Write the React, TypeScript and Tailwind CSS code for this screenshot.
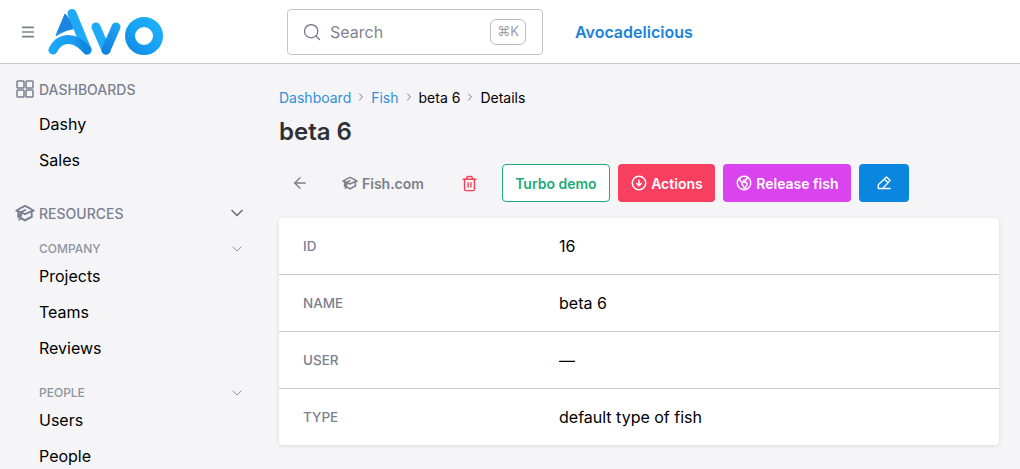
import { ArrowLeft, ChevronDown, ChevronRight, Menu, Search, Trash2 } from 'lucide-react';

const font = { fontFamily: 'Inter, sans-serif' };

function GradCap({ className }: { className?: string }) {
  return (
    <svg className={className} viewBox="0 0 24 24" fill="none" stroke="currentColor" strokeWidth={2.3} strokeLinecap="round" strokeLinejoin="round">
      <path d="M4.26 10.147a60.438 60.438 0 0 0-.491 6.347A48.62 48.62 0 0 1 12 20.904a48.62 48.62 0 0 1 8.232-4.41 60.46 60.46 0 0 0-.491-6.347m-15.482 0a50.636 50.636 0 0 0-2.658-.813A59.906 59.906 0 0 1 12 3.493a59.903 59.903 0 0 1 10.399 5.84c-.896.248-1.783.52-2.658.814m-15.482 0A50.717 50.717 0 0 1 12 13.489a50.702 50.702 0 0 1 7.74-3.342M6.75 15a.75.75 0 1 0 0-1.5.75.75 0 0 0 0 1.5Zm0 0v-3.675A55.378 55.378 0 0 1 12 8.443m-7.007 11.55A5.981 5.981 0 0 0 6.75 15.75v-1.5" />
    </svg>
  );
}

function Globe({ className }: { className?: string }) {
  return (
    <svg className={className} viewBox="0 0 24 24" fill="none" stroke="currentColor" strokeWidth={2} strokeLinecap="round" strokeLinejoin="round">
      <path d="m6.115 5.19.319 1.913A6 6 0 0 0 8.11 10.36L9.75 12l-.387.775c-.217.433-.132.956.21 1.298l1.348 1.348c.21.21.329.497.329.795v1.089c0 .426.24.815.622 1.006l.153.076c.433.217.956.132 1.298-.21l.723-.723a8.7 8.7 0 0 0 2.288-4.042 1.087 1.087 0 0 0-.358-1.099l-1.33-1.108c-.251-.21-.582-.299-.905-.245l-1.17.195a1.125 1.125 0 0 1-.98-.314l-.295-.295a1.125 1.125 0 0 1 0-1.591l.13-.132a1.125 1.125 0 0 1 1.3-.21l.603.302a.809.809 0 0 0 1.086-1.086L14.25 7.5l1.256-.837a4.5 4.5 0 0 0 1.528-1.732l.146-.292M6.115 5.19A9 9 0 1 0 17.18 4.64M6.115 5.19A8.965 8.965 0 0 1 12 3c1.929 0 3.716.607 5.18 1.64" />
    </svg>
  );
}

function DownCircle({ className }: { className?: string }) {
  return (
    <svg className={className} viewBox="0 0 24 24" fill="none" stroke="currentColor" strokeWidth={2} strokeLinecap="round" strokeLinejoin="round">
      <path d="m9 12.75 3 3m0 0 3-3m-3 3v-7.5M21 12a9 9 0 1 1-18 0 9 9 0 0 1 18 0Z" />
    </svg>
  );
}

function Pencil({ className }: { className?: string }) {
  return (
    <svg className={className} viewBox="0 0 16 16" fill="none" stroke="currentColor" strokeWidth={1.3} strokeLinecap="round" strokeLinejoin="round">
      <path d="M10.500 2 14.200 5.400 6.800 13.500H2.300V9.700L10.500 2Z" />
      <path d="M8.300 4.200 12 7.600" />
      <path d="M6.800 13.500H14.200" />
    </svg>
  );
}

function DashGrid({ className }: { className?: string }) {
  return (
    <svg className={className} viewBox="0 0 18 18" fill="none" stroke="currentColor" strokeWidth={1.5}>
      <rect x="1" y="1" width="7" height="7" rx="0.800" />
      <rect x="10" y="1" width="7" height="7" rx="0.800" />
      <rect x="1" y="10" width="7" height="7" rx="0.800" />
      <rect x="10" y="10" width="7" height="7" rx="0.800" />
    </svg>
  );
}

function Logo() {
  return (
    <svg width="116" height="48" viewBox="0 0 116 48" fill="none" className="shrink-0">
      <defs>
        <linearGradient id="avo-o" gradientUnits="userSpaceOnUse" x1="82" y1="44" x2="110" y2="12">
          <stop offset="0" stopColor="#0f8ae4" />
          <stop offset="0.500" stopColor="#18a4f6" />
          <stop offset="1" stopColor="#1fb0fb" />
        </linearGradient>
        <linearGradient id="avo-arc" gradientUnits="userSpaceOnUse" x1="5" y1="42" x2="36" y2="38">
          <stop offset="0" stopColor="#1ba8f8" />
          <stop offset="0.700" stopColor="#1a9cf0" />
          <stop offset="1" stopColor="#0f86e0" />
        </linearGradient>
        <linearGradient id="avo-v" gradientUnits="userSpaceOnUse" x1="58" y1="42" x2="70" y2="15">
          <stop offset="0" stopColor="#1183de" />
          <stop offset="1" stopColor="#1ea8f8" />
        </linearGradient>
      </defs>
      {/* A */}
      <path d="M17 6 8 27.500 Q18 21 29 20 Z" fill="#1a86e0" stroke="#1a86e0" strokeWidth="1" strokeLinejoin="round" />
      <path d="M24 5.500 39 42" stroke="#1ea9f9" strokeWidth="9" strokeLinecap="round" />
      <path d="M5 42 C11 30 25 26 39 42" stroke="url(#avo-arc)" strokeWidth="9" strokeLinecap="round" />
      {/* V */}
      <path d="M48 19 58 42" stroke="#1ea9f9" strokeWidth="9" strokeLinecap="round" />
      <path d="M58 42 68 19" stroke="url(#avo-v)" strokeWidth="9" strokeLinecap="round" />
      {/* O */}
      <circle cx="96" cy="28" r="14" stroke="url(#avo-o)" strokeWidth="10" />
    </svg>
  );
}

function NavHeading({ icon, label, chevron }: { icon: React.ReactNode; label: string; chevron?: boolean }) {
  return (
    <div className="flex items-center h-5 pl-4 pr-8 text-[14px] font-medium text-[#7b8090]">
      <span className="w-[23px] shrink-0">{icon}</span>
      <span>{label}</span>
      {chevron && <ChevronDown className="ml-auto w-5 h-5 text-[#6b7280]" strokeWidth={2} />}
    </div>
  );
}

function NavLink({ label }: { label: string }) {
  return <div className="h-9 flex items-center pl-[39px] text-[16px] text-black">{label}</div>;
}

function SubHeading({ label }: { label: string }) {
  return (
    <div className="flex items-center h-4 pl-[39px] pr-[34px] text-[12px] font-medium text-[#8e939f]">
      <span>{label}</span>
      <ChevronDown className="ml-auto w-4 h-4 text-[#8e939f]" strokeWidth={1.5} />
    </div>
  );
}

const rows = [
  { label: 'ID', value: '16' },
  { label: 'NAME', value: 'beta 6' },
  { label: 'USER', value: '—' },
  { label: 'TYPE', value: 'default type of fish' },
];

export default function App() {
  return (
    <div className="h-[469px] w-[1020px] overflow-hidden bg-[#f5f5f8] flex flex-col" style={font}>
      <header className="h-16 shrink-0 bg-white border-b border-[#c9c9cc] flex items-center">
        <div className="w-[287px] shrink-0 flex items-center pl-[20px]">
          <Menu className="w-4 h-4 text-[#7b7f88] mr-3" strokeWidth={2.4} />
          <Logo />
        </div>
        <div className="w-64 h-[46px] bg-white border border-[#c4c4c8] rounded flex items-center pl-[14px] pr-4">
          <Search className="w-5 h-5 text-[#6b7280] mr-2" strokeWidth={1.5} />
          <span className="text-[16px] text-[#80848e]">Search</span>
          <span className="ml-auto w-9 h-[26px] border border-[#b9bcc2] rounded-md flex items-center justify-center text-[13px] text-[#9a9da6]">⌘K</span>
        </div>
        <div className="ml-8 text-[16px] font-semibold text-[#1a83d8]">Avocadelicious</div>
      </header>
      <div className="flex flex-1 min-h-0">
        <aside className="w-[279px] shrink-0 pt-[15px]">
          <NavHeading icon={<DashGrid className="w-[18px] h-[18px]" />} label="DASHBOARDS" />
          <div className="mt-[7px]">
            <NavLink label="Dashy" />
            <NavLink label="Sales" />
          </div>
          <div className="mt-[25px]">
            <NavHeading icon={<GradCap className="w-5 h-5 -ml-[1px]" />} label="RESOURCES" chevron />
          </div>
          <div className="mt-[18px]">
            <SubHeading label="COMPANY" />
          </div>
          <div className="mt-[1px]">
            <NavLink label="Projects" />
            <NavLink label="Teams" />
            <NavLink label="Reviews" />
          </div>
          <div className="mt-[19px]">
            <SubHeading label="PEOPLE" />
          </div>
          <div className="mt-[1px]">
            <NavLink label="Users" />
            <NavLink label="People" />
          </div>
        </aside>
        <main className="flex-1 pt-[23px] pr-[21px]">
          <div className="flex items-center h-5 text-[14px] text-black">
            <span className="text-[#2f8fd8]">Dashboard</span>
            <ChevronRight className="w-3 h-3 mx-[4px] text-[#7b7f88]" />
            <span className="text-[#2f8fd8]">Fish</span>
            <ChevronRight className="w-3 h-3 mx-[4px] text-[#7b7f88]" />
            <span>beta 6</span>
            <ChevronRight className="w-3 h-3 mx-[4px] text-[#7b7f88]" />
            <span>Details</span>
          </div>
          <h1 className="mt-[9px] h-8 flex items-center text-[24px] font-semibold leading-8 text-[#2f3033]">beta 6</h1>
          <div className="mt-4 flex items-center h-[38px] text-[14px] font-semibold">
            <div className="w-[42px] flex justify-center">
              <ArrowLeft className="w-[18px] h-[18px] text-[#7b7f88]" strokeWidth={1.75} />
            </div>
            <div className="ml-[21px] flex items-center text-[#7b7f88]">
              <GradCap className="w-4 h-4 mr-1" />
              <span>Fish.com</span>
            </div>
            <div className="ml-[37px] w-[17px] flex justify-center">
              <Trash2 className="w-[17px] h-[17px] text-[#ef4458]" strokeWidth={2} />
            </div>
            <div className="ml-6 h-[38px] w-[108px] flex items-center justify-center bg-white border border-[#1fa77f] rounded text-[#21ab79]">Turbo demo</div>
            <div className="ml-2 h-[38px] w-[97px] flex items-center justify-center gap-[3px] bg-[#f83f5f] rounded text-white">
              <DownCircle className="w-[18px] h-[18px]" />
              Actions
            </div>
            <div className="ml-2 h-[38px] w-[128px] flex items-center justify-center gap-[3px] bg-[#da44ee] rounded text-white">
              <Globe className="w-[18px] h-[18px]" />
              Release fish
            </div>
            <div className="ml-2 h-[38px] w-[50px] flex items-center justify-center bg-[#0b86de] rounded text-white">
              <Pencil className="w-4 h-4" />
            </div>
          </div>
          <div className="mt-4 bg-white rounded shadow-[0_1px_4px_rgba(0,0,0,0.12)] divide-y divide-[#c9c9cc]">
            {rows.map((row) => (
              <div key={row.label} className="h-[57px] last:h-[56px] flex items-center">
                <div className="w-[280px] pl-6 text-[13.5px] font-medium text-[#7b8090]">{row.label}</div>
                <div className="text-[16px] text-black">{row.value}</div>
              </div>
            ))}
          </div>
        </main>
      </div>
    </div>
  );
}
